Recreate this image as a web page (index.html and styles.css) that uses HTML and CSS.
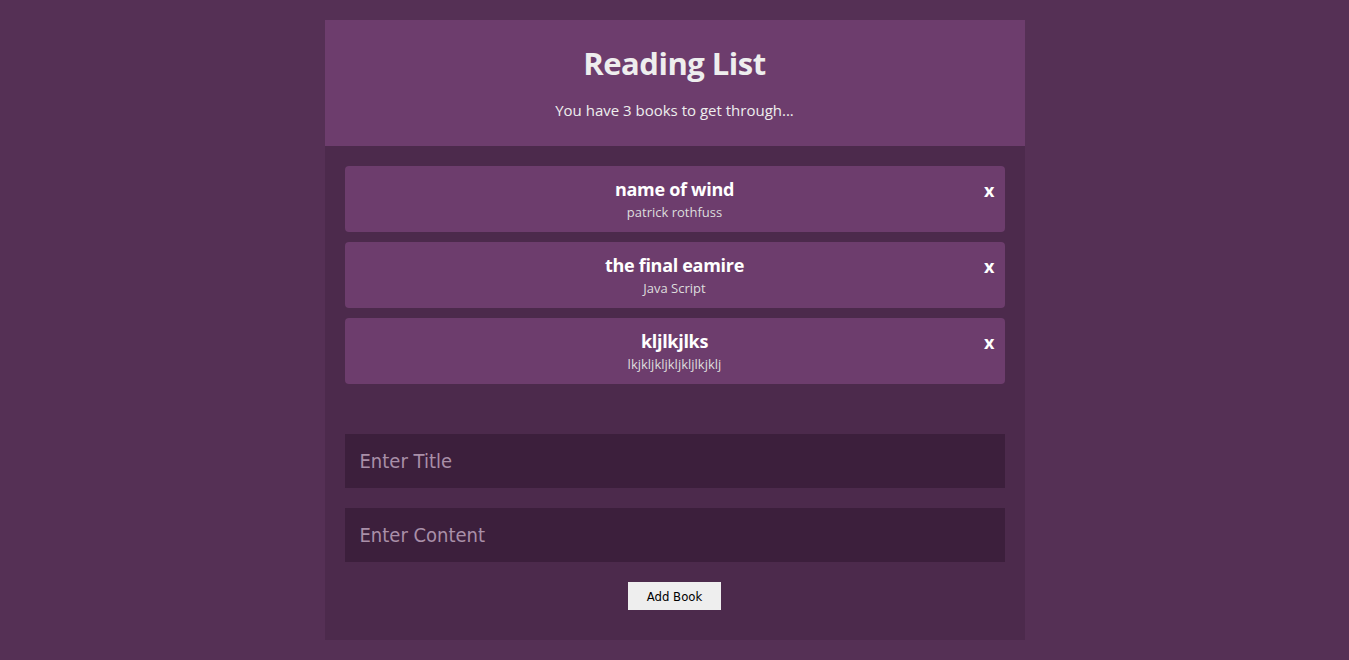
FILE: index.html
```html
<!DOCTYPE html>
<html lang="en">
<head>
<meta charset="utf-8">
<title>Reading List</title>
<link rel="stylesheet" href="styles.css">
</head>
<body>
<div class="app">
  <header class="navbar">
    <h1 class="navbar-title">Reading List</h1>
    <p class="navbar-sub">You have 3 books to get through...</p>
  </header>
  <main class="content">
    <ul class="book-list">
      <li class="book">
        <div class="book-title">name of wind</div>
        <div class="book-author">patrick rothfuss</div>
        <span class="book-remove">x</span>
      </li>
      <li class="book">
        <div class="book-title">the final eamire</div>
        <div class="book-author">Java Script</div>
        <span class="book-remove">x</span>
      </li>
      <li class="book">
        <div class="book-title">kljlkjlks</div>
        <div class="book-author">lkjkljkljkljkljlkjklj</div>
        <span class="book-remove">x</span>
      </li>
    </ul>
    <form class="book-form">
      <input class="field" type="text" placeholder="Enter Title">
      <input class="field" type="text" placeholder="Enter Content">
      <button class="submit" type="button">Add Book</button>
    </form>
  </main>
</div>
</body>
</html>
```
FILE: styles.css
```css
html, body {
  margin: 0;
  padding: 0;
}
body {
  background: #553055;
  font-family: "Open Sans", "Noto Sans", sans-serif;
  color: #eee;
  padding: 20px 0;
}
.app {
  width: 700px;
  margin: 0 auto;
  background: #4c2a4c;
}
.navbar {
  background: #6d3d6d;
  text-align: center;
  padding: 21px 20px 25px;
}
.navbar-title {
  margin: 0;
  font-size: 31px;
  line-height: 44px;
  font-weight: 700;
  color: #eee;
  letter-spacing: -0.5px;
}
.navbar-sub {
  margin: 14px 0 0;
  font-size: 15px;
  line-height: 22px;
  color: #eee;
}
.content {
  padding: 20px 20px 30px;
}
.book-list {
  list-style: none;
  margin: 0;
  padding: 0;
  display: flex;
  flex-direction: column;
  gap: 10px;
}
.book {
  position: relative;
  background: #6d3d6d;
  border-radius: 4px;
  padding: 10px;
  text-align: center;
}
.book-title {
  font-weight: 700;
  color: #fff;
  font-size: 18px;
  line-height: 27px;
  letter-spacing: -0.3px;
}
.book-author {
  font-size: 13px;
  line-height: 19px;
  color: #ddd;
}
.book-remove {
  position: absolute;
  right: 10px;
  top: 11px;
  font-weight: 700;
  font-size: 18px;
  line-height: 26px;
  color: #fff;
}
.book-form {
  margin-top: 50px;
  display: flex;
  flex-direction: column;
  gap: 20px;
}
.field {
  display: block;
  width: 100%;
  box-sizing: border-box;
  height: 54px;
  margin: 0;
  padding: 0 15px;
  background: #3c1f3c;
  border: 0;
  color: #fff;
  font-family: "DejaVu Sans Condensed", "DejaVu Sans", sans-serif;
  font-size: 20px;
  outline: none;
}
.field::placeholder {
  color: #a98fa8;
}
.submit {
  align-self: center;
  width: 93px;
  height: 28px;
  background: #eee;
  border: 0;
  padding: 0;
  font-family: "DejaVu Sans Condensed", "DejaVu Sans", sans-serif;
  font-size: 13px;
  color: #000;
}
```
